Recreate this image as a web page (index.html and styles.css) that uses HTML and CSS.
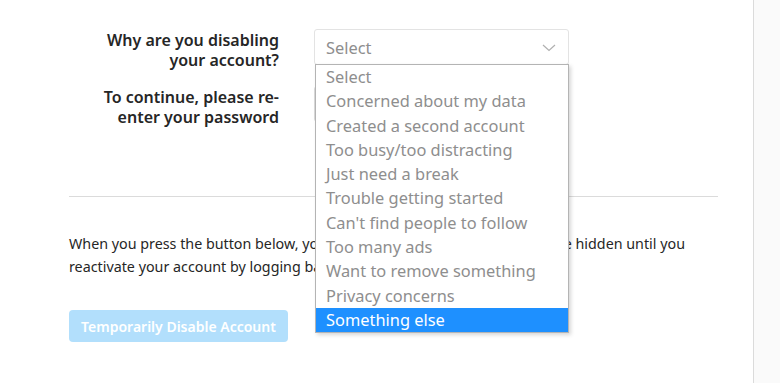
FILE: index.html
```html
<!DOCTYPE html>
<html lang="en">
<head>
    <meta charset="UTF-8">
    <meta name="viewport" content="width=device-width, initial-scale=1.0">
    <title>Temporarily Disable Your Account</title>
    <link rel="stylesheet" href="styles.css">
</head>
<body>
    <div class="page">
        <main class="main">
            <form class="disable-form">
                <div class="form-row">
                    <label class="form-label" for="reason">Why are you disabling your account?</label>
                    <div class="field">
                        <div class="select-box" id="reason">
                            <span class="select-value">Select</span>
                            <svg class="chevron" width="14" height="8" viewBox="0 0 14 8" aria-hidden="true">
                                <path d="M1 1l6 5.5L13 1" fill="none" stroke="#b0b0b0" stroke-width="1.2"/>
                            </svg>
                        </div>
                        <ul class="dropdown" role="listbox">
                            <li class="option">Select</li>
                            <li class="option">Concerned about my data</li>
                            <li class="option">Created a second account</li>
                            <li class="option">Too busy/too distracting</li>
                            <li class="option">Just need a break</li>
                            <li class="option">Trouble getting started</li>
                            <li class="option">Can't find people to follow</li>
                            <li class="option">Too many ads</li>
                            <li class="option">Want to remove something</li>
                            <li class="option">Privacy concerns</li>
                            <li class="option active">Something else</li>
                        </ul>
                    </div>
                </div>

                <div class="form-row">
                    <label class="form-label" for="password">To continue, please re-enter your password</label>
                    <div class="field">
                        <input class="text-input" type="password" id="password">
                    </div>
                </div>
            </form>

            <hr class="divider">

            <p class="notice">When you press the button below, your photos, comments and likes will be hidden until you reactivate your account by logging back in.</p>

            <button class="disable-btn" type="button" disabled>Temporarily Disable Account</button>
        </main>
        <aside class="side"></aside>
    </div>
</body>
</html>
```

FILE: styles.css
```css
* {
    margin: 0;
    padding: 0;
    box-sizing: border-box;
}

body {
    font-family: 'Noto Sans', 'Open Sans', sans-serif;
    color: #262626;
    background-color: #fafafa;
}

.page {
    display: flex;
    height: 383px;
    overflow: hidden;
}

.main {
    width: 754px;
    flex-shrink: 0;
    padding: 29px 35px 0 69px;
    background-color: #ffffff;
    border-right: 1px solid #dbdbdb;
}

.side {
    flex: 1;
}

.disable-form {
    display: flex;
    flex-direction: column;
    gap: 16px;
}

.form-row {
    display: grid;
    grid-template-columns: 210px 255px;
    column-gap: 35px;
    align-items: start;
}

.form-label {
    padding: 1px 0 0 16px;
    font-size: 16px;
    font-weight: 600;
    line-height: 20px;
    text-align: right;
    color: #262626;
}

.field {
    position: relative;
}

.select-box {
    display: flex;
    align-items: center;
    justify-content: space-between;
    height: 36px;
    padding: 0 12px 0 11px;
    border: 1px solid #e3e3e3;
    border-radius: 3px;
    background-color: #fff;
}

.select-value {
    font-size: 16.4px;
    color: #8e8e8e;
}

.chevron {
    margin-top: 2px;
}

.dropdown {
    position: absolute;
    top: 35px;
    left: 1px;
    width: 254px;
    list-style: none;
    background-color: #fff;
    border: 1px solid #b4b4b4;
    box-shadow: 2px 2px 4px rgba(0, 0, 0, 0.16);
    z-index: 2;
}

.option {
    height: 24.3px;
    padding-left: 10px;
    font-size: 16.4px;
    line-height: 24.3px;
    color: #8e8e8e;
    white-space: nowrap;
}

.option.active {
    background-color: #1e90ff;
    color: #fff;
}

.text-input {
    width: 100%;
    height: 36px;
    border: 1px solid #dbdbdb;
    border-radius: 3px;
    background-color: #fafafa;
}

.divider {
    margin-top: 69px;
    border: none;
    border-top: 1px solid #dbdbdb;
}

.notice {
    margin-top: 35px;
    font-size: 14.3px;
    line-height: 23px;
    color: #262626;
}

.disable-btn {
    margin-top: 32px;
    width: 219px;
    height: 32px;
    border: none;
    border-radius: 4px;
    background-color: #b2dffc;
    color: #fff;
    font-family: inherit;
    font-size: 14px;
    font-weight: 600;
}
```
